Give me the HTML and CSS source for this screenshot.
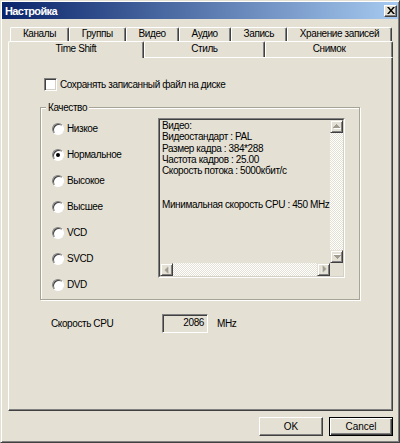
FILE: index.html
```html
<!doctype html>
<html lang="ru">

<head>
    <title>Настройка</title>
    <meta charset="utf-8">
    <link rel="stylesheet" href="styles.css">
</head>

<body>
    <div class="window">
        <div class="titlebar">
            <span class="title">Настройка</span>
            <span class="close">
                <svg width="8" height="7" viewBox="0 0 8 7">
                    <path d="M0 0h2l2 2.5L6 0h2L5 3.5 8 7H6L4 4.5 2 7H0l3-3.5z" fill="#000" />
                </svg>
            </span>
        </div>

        <div class="content">
            <div class="tabrow back">
                <div class="tab">Каналы</div>
                <div class="tab">Группы</div>
                <div class="tab">Видео</div>
                <div class="tab">Аудио</div>
                <div class="tab">Запись</div>
                <div class="tab">Хранение записей</div>
            </div>
            <div class="tabrow front">
                <div class="tab active">Time Shift</div>
                <div class="tab">Стиль</div>
                <div class="tab">Снимок</div>
            </div>

            <div class="panel">
                <div class="check">
                    <span class="checkbox"></span>
                    <span>Сохранять записанный файл на диске</span>
                </div>

                <fieldset class="group">
                    <legend>Качество</legend>
                    <div class="radios">
                        <div class="radio-row"><span class="radio"></span>Низкое</div>
                        <div class="radio-row"><span class="radio checked"></span>Нормальное</div>
                        <div class="radio-row"><span class="radio"></span>Высокое</div>
                        <div class="radio-row"><span class="radio"></span>Высшее</div>
                        <div class="radio-row"><span class="radio"></span>VCD</div>
                        <div class="radio-row"><span class="radio"></span>SVCD</div>
                        <div class="radio-row"><span class="radio"></span>DVD</div>
                    </div>

                    <div class="info">
                        <div class="info-inner">
                            <div class="info-text">
                                Видео:<br>
                                Видеостандарт : PAL<br>
                                Размер кадра : 384*288<br>
                                Частота кадров : 25.00<br>
                                Скорость потока : 5000кбит/с<br>
                                <br>
                                <br>
                                Минимальная скорость CPU : 450 MHz
                            </div>
                            <div class="vscroll">
                                <span class="sbtn up"><svg width="8" height="5" viewBox="0 0 8 5"><path d="M4 1h1v1h1v1h1v1h1v1H1V4h1V3h1V2h1z" fill="#fff" /><path d="M3 0h1v1h1v1h1v1h1v1H0V3h1V2h1V1h1z" fill="#a09c90" /></svg></span>
                                <span class="sbtn down"><svg width="8" height="5" viewBox="0 0 8 5"><path d="M4 1h1v1h1v1h1v1h1v1H1V4h1V3h1V2h1z" fill="#fff" /><path d="M3 0h1v1h1v1h1v1h1v1H0V3h1V2h1V1h1z" fill="#a09c90" /></svg></span>
                            </div>
                            <div class="hscroll">
                                <span class="sbtn left"><svg width="8" height="5" viewBox="0 0 8 5"><path d="M4 1h1v1h1v1h1v1h1v1H1V4h1V3h1V2h1z" fill="#fff" /><path d="M3 0h1v1h1v1h1v1h1v1H0V3h1V2h1V1h1z" fill="#a09c90" /></svg></span>
                                <span class="sbtn right"><svg width="8" height="5" viewBox="0 0 8 5"><path d="M4 1h1v1h1v1h1v1h1v1H1V4h1V3h1V2h1z" fill="#fff" /><path d="M3 0h1v1h1v1h1v1h1v1H0V3h1V2h1V1h1z" fill="#a09c90" /></svg></span>
                            </div>
                            <div class="corner"></div>
                        </div>
                    </div>
                </fieldset>

                <div class="cpu">
                    <span class="cpu-label">Скорость CPU</span>
                    <span class="cpu-box">2086</span>
                    <span class="unit">MHz</span>
                </div>
            </div>

            <div class="buttons">
                <button class="btn">OK</button>
                <button class="btn default">Cancel</button>
            </div>
        </div>
    </div>
</body>

</html>
```

FILE: styles.css
```css
* {
    box-sizing: border-box;
}

body {
    margin: 0;
    background: #e4e0d4;
    font-family: "Liberation Sans", Arial, sans-serif;
    font-size: 10px;
    letter-spacing: -0.4px;
    color: #000;
}

.window {
    width: 400px;
    height: 443px;
    padding: 1px;
    border: 1px solid;
    border-color: #e4e0d4 #404040 #404040 #e4e0d4;
    box-shadow: inset 1px 1px #fff, inset -1px -1px #808080;
    display: flex;
    flex-direction: column;
}

.titlebar {
    height: 17px;
    background: linear-gradient(to right, #0a246a, #a6caf0);
    display: flex;
    align-items: center;
    justify-content: space-between;
    padding: 0 1px 0 3px;
    color: #fff;
    font-size: 11px;
    font-weight: bold;
    letter-spacing: -0.6px;
}

.close {
    width: 13px;
    height: 12px;
    background: #e4e0d4;
    border: 1px solid;
    border-color: #fff #404040 #404040 #fff;
    box-shadow: inset -1px -1px #808080;
    display: grid;
    place-items: center;
}

.close svg {
    display: block;
}

.content {
    flex: 1;
    padding: 8px 5px 0 6px;
    display: flex;
    flex-direction: column;
}

/* tabs */
.tabrow {
    display: flex;
    height: 14px;
}

.tabrow.back {
    margin: 0 1px 0 2px;
}

.tabrow.front {
    height: 16px;
}

.tab {
    flex: 1 1 auto;
    text-align: center;
    white-space: nowrap;
    line-height: 12px;
    border: 1px solid;
    border-bottom: none;
    border-color: #fff #404040 #404040 #fff;
    border-radius: 2px 2px 0 0;
    box-shadow: inset -1px 0 #808080;
    background: #e4e0d4;
}

.front .tab {
    line-height: 14px;
}

.tab.active {
    position: relative;
    z-index: 1;
    margin-bottom: -1px;
}

.panel {
    height: 354px;
    border: 1px solid;
    border-color: #fff #404040 #404040 #fff;
    box-shadow: inset -1px -1px #808080;
    padding: 20px 32px 0 31px;
}

/* checkbox */
.check {
    display: flex;
    align-items: center;
    gap: 3px;
    height: 13px;
    margin-left: 4px;
}

.checkbox {
    width: 13px;
    height: 13px;
    background: #fff;
    border: 1px solid;
    border-color: #808080 #fff #fff #808080;
    box-shadow: inset 1px 1px #404040, inset -1px -1px #d4d0c8;
}

/* group */
.group {
    margin: 10px 0 0;
    padding: 4px 14px 8px 11px;
    border: 1px solid #a7a396;
    box-shadow: inset 1px 1px #fff, 1px 1px #fff;
    display: flex;
    min-width: 0;
}

.group legend {
    margin-left: -6px;
    padding: 0 2px;
    line-height: 13px;
    background: #e4e0d4;
}

.radios {
    width: 106px;
    flex: none;
    display: flex;
    flex-direction: column;
    gap: 13px;
    padding-top: 4px;
}

.radio-row {
    display: flex;
    align-items: center;
    gap: 3px;
    height: 13px;
}

.radio {
    width: 12px;
    height: 12px;
    border-radius: 50%;
    background: #fff;
    border: 1px solid;
    border-color: #808080 #fff #fff #808080;
    box-shadow: inset 1px 1px #404040;
    display: grid;
    place-items: center;
}

.radio.checked::after {
    content: "";
    width: 4px;
    height: 4px;
    border-radius: 50%;
    background: #000;
}

/* info box */
.info {
    width: 187px;
    height: 160px;
    border: 1px solid;
    border-color: #808080 #fff #fff #808080;
}

.info-inner {
    height: 100%;
    border: 1px solid;
    border-color: #404040 #d4d0c8 #d4d0c8 #404040;
    display: grid;
    grid-template-columns: 1fr 13px;
    grid-template-rows: 1fr 13px;
}

.info-text {
    padding: 0 2px;
    line-height: 11.3px;
    overflow: hidden;
    white-space: nowrap;
}

.vscroll,
.hscroll {
    display: flex;
    justify-content: space-between;
    background: repeating-conic-gradient(#fff 0 25%, #e4e0d4 0 50%) 0 0 / 2px 2px;
}

.vscroll {
    flex-direction: column;
}

.sbtn {
    width: 13px;
    height: 13px;
    background: #e4e0d4;
    border: 1px solid;
    border-color: #e4e0d4 #404040 #404040 #e4e0d4;
    box-shadow: inset 1px 1px #fff, inset -1px -1px #808080;
    display: grid;
    place-items: center;
}

.sbtn svg {
    display: block;
}

.sbtn.down svg {
    transform: rotate(180deg);
}

.sbtn.left svg {
    transform: rotate(-90deg);
}

.sbtn.right svg {
    transform: rotate(90deg);
}

.corner {
    background: #e4e0d4;
}

/* cpu */
.cpu {
    display: flex;
    align-items: center;
    margin: 14px 0 0 11px;
}

.cpu-label {
    width: 111px;
}

.cpu-box {
    width: 46px;
    height: 19px;
    border: 1px solid;
    border-color: #808080 #fff #fff #808080;
    box-shadow: inset 1px 1px #404040;
    text-align: right;
    padding: 0 3px;
    line-height: 16px;
}

.unit {
    margin-left: 9px;
}

/* buttons */
.buttons {
    display: flex;
    justify-content: flex-end;
    gap: 6px;
    margin-top: 6px;
}

.btn {
    width: 64px;
    height: 19px;
    padding: 0;
    font: inherit;
    color: #000;
    background: #e4e0d4;
    border: 1px solid;
    border-color: #fff #404040 #404040 #fff;
    box-shadow: inset -1px -1px #808080;
}

.btn.default {
    border-color: #000;
    box-shadow: inset 1px 1px #fff, inset -1px -1px #404040, inset -2px -2px #808080;
}
```
